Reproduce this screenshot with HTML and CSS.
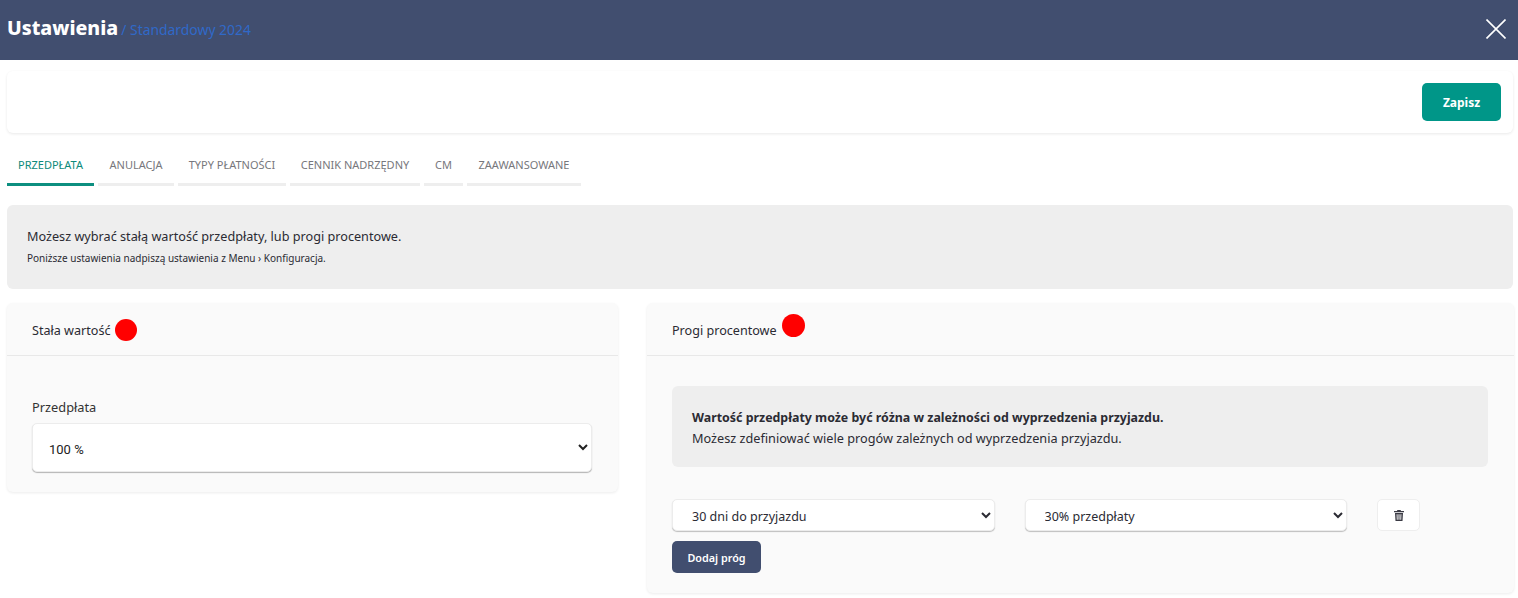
FILE: index.html
```html
<!DOCTYPE html>
<html lang="pl">
<head>
<meta charset="utf-8">
<title>Ustawienia</title>
<link rel="stylesheet" href="styles.css">
</head>
<body>
<header class="topbar">
  <h1 class="title">Ustawienia <span class="subtitle">/ Standardowy 2024</span></h1>
  <svg class="close" width="20" height="20" viewBox="0 0 20 20" aria-hidden="true"><path d="M.5.5 19.500 19.500M19.500.5.5 19.500" stroke="#fff" stroke-width="1.6" fill="none"/></svg>
</header>
<main class="page">
  <div class="toolbar"><button class="save">Zapisz</button></div>
  <nav class="tabs">
    <a class="tab active t1">PRZEDPŁATA</a>
    <a class="tab t2">ANULACJA</a>
    <a class="tab t3">TYPY PŁATNOŚCI</a>
    <a class="tab t4">CENNIK NADRZĘDNY</a>
    <a class="tab t5">CM</a>
    <a class="tab t6">ZAAWANSOWANE</a>
  </nav>
  <section class="info">
    <p class="info-main">Możesz wybrać stałą wartość przedpłaty, lub progi procentowe.</p>
    <p class="info-small">Poniższe ustawienia nadpiszą ustawienia z Menu › Konfiguracja.</p>
  </section>
  <div class="columns">
    <section class="card left">
      <div class="card-head"><span>Stała wartość</span><i class="dot"></i></div>
      <div class="card-body body-left">
        <label class="label">Przedpłata</label>
        <select class="select-big"><option>100 %</option></select>
      </div>
    </section>
    <section class="card right">
      <div class="card-head"><span>Progi procentowe</span><i class="dot dot-high"></i></div>
      <div class="card-body body-right">
        <div class="alert">
          <p class="alert-strong">Wartość przedpłaty może być różna w zależności od wyprzedzenia przyjazdu.</p>
          <p class="alert-text">Możesz zdefiniować wiele progów zależnych od wyprzedzenia przyjazdu.</p>
        </div>
        <div class="row">
          <select class="select-small"><option>30 dni do przyjazdu</option></select>
          <select class="select-small"><option>30% przedpłaty</option></select>
          <button class="trash" aria-label="Usuń">
            <svg width="10" height="11" viewBox="0 0 10 11" aria-hidden="true"><path fill="#3a3a44" d="M3.4 0h3.2l.4 1H10v1.2H0V1h3zM1 3h8l-.5 8h-7zm1.6 1.2.2 5.6h.9l-.2-5.6zm1.9 0v5.6h1V4.200zm2 0-.2 5.600h.9l.2-5.600z"/></svg>
          </button>
        </div>
        <button class="add">Dodaj próg</button>
      </div>
    </section>
  </div>
</main>
</body>
</html>
```
FILE: styles.css
```css
* { box-sizing: border-box; }
html, body { margin: 0; height: 598px; overflow: hidden; }
body { background: #fff; font-family: "Noto Sans", "Open Sans", sans-serif; color: #2b2b33; font-size: 13px; }
p { margin: 0; }
.topbar { height: 60px; background: #414e6f; display: flex; align-items: center; justify-content: space-between; padding: 0 12px 0 7px; }
.title { margin: 0; font-size: 19.500px; font-weight: 800; color: #fff; line-height: 1; position: relative; top: -2px; }
.subtitle { font-size: 13.900px; font-weight: 400; color: #3069c8; margin-left: -2px; }
.close { display: block; position: relative; top: -1px; }
.page { padding: 11px 5px 0 7px; }
.toolbar { height: 62px; border-radius: 6px; background: #fff; box-shadow: 0 1px 3px rgba(0,0,0,.09); display: flex; align-items: center; justify-content: flex-end; padding-right: 12px; }
.save { width: 79px; height: 38px; border: 0; border-radius: 5px; background: #009688; color: #fff; font: 700 12px "Noto Sans", sans-serif; }
.tabs { display: flex; gap: 4px; margin-top: 21px; }
.tab { height: 32px; border-bottom: 3px solid #eeeeee; color: #77777c; font-size: 11px; text-align: center; line-height: 22px; }
.tab.active { color: #0d8a7b; border-bottom-color: #0d8f80; }
.t1 { width: 87px; } .t2 { width: 76px; } .t3 { width: 108px; } .t4 { width: 130px; } .t5 { width: 39px; } .t6 { width: 114px; }
.info { height: 84px; margin-top: 19px; padding: 22px 20px 0; background: #eeeeee; border-radius: 6px; }
.info-main { font-size: 12.660px; line-height: 18px; }
.info-small { font-size: 10px; line-height: 14px; margin-top: 6px; }
.columns { display: flex; align-items: flex-start; gap: 29px; margin-top: 14px; margin-right: -1px; }
.card { background: #fafafa; border-radius: 6px; box-shadow: 0 1px 3px rgba(0,0,0,.08); }
.left { width: 611px; height: 189px; }
.right { flex: 1; height: 290px; }
.card-head { height: 53px; padding: 2px 0 0 25px; border-bottom: 1px solid #e8e8e8; display: flex; align-items: center; gap: 4px; font-size: 12.600px; }
.right .card-head { gap: 5px; }
.dot { width: 22px; height: 22px; border-radius: 50%; background: #ff0000; display: block; }
.dot-high { width: 23px; height: 23px; margin-top: -10px; }
.body-left { padding: 42px 25px 0; }
.label { display: block; font-size: 12.800px; line-height: 18px; color: #333; }
.select-big { display: block; width: 560px; height: 49px; margin-top: 7px; padding: 4px 0 0 12px; background: #fff; border: 1px solid #ececec; border-radius: 5px; box-shadow: 0 1px 1px rgba(0,0,0,.28); font: 13px Roboto, sans-serif; color: #222; }
.body-right { padding: 30px 26px 0 25px; }
.alert { height: 81px; padding: 21px 20px 0; background: #eeeeee; border-radius: 6px; line-height: 21px; }
.alert-strong { font-weight: 700; font-size: 12.400px; }
.alert-text { font-size: 12.700px; }
.row { display: flex; gap: 30px; margin-top: 32px; }
.select-small { width: 322.500px; height: 32px; padding: 2px 0 0 15px; background: #fff; border: 1px solid #ececec; border-radius: 5px; box-shadow: 0 1px 1px rgba(0,0,0,.24); font: 12.500px "Noto Sans", sans-serif; color: #2b2b33; }
.trash { width: 43px; height: 32px; background: #fff; border: 1px solid #eeeeee; border-radius: 5px; display: flex; align-items: center; justify-content: center; padding: 0; }
.add { display: block; width: 89px; height: 32px; margin-top: 10px; border: 0; border-radius: 5px; background: #414e6f; color: #fff; font: 600 10.800px "Noto Sans", sans-serif; }
```
